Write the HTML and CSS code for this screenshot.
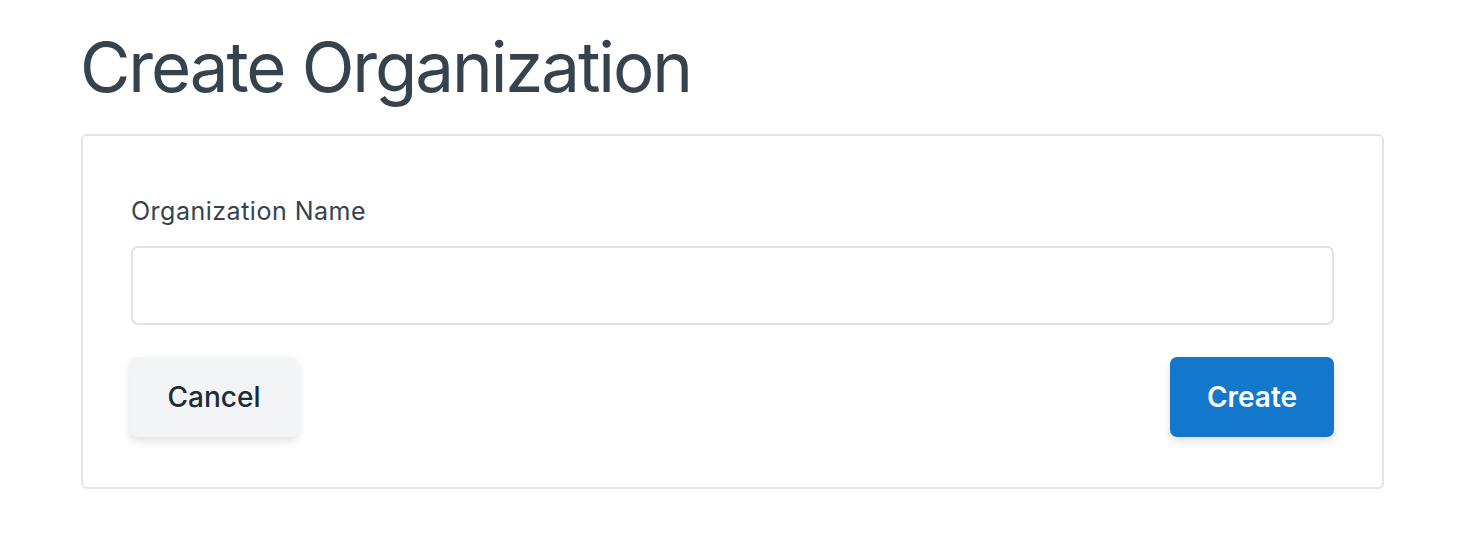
FILE: index.html
```html
<!DOCTYPE html>
<html>
<head>
<meta charset="utf-8">
<link rel="stylesheet" href="styles.css">
</head>
<body>
<main class="page">
  <h1 class="title">Create Organization</h1>
  <form class="card">
    <label class="label" for="org">Organization Name</label>
    <input class="input" id="org" type="text">
    <div class="actions">
      <button type="button" class="btn btn-cancel">Cancel</button>
      <button type="submit" class="btn btn-create">Create</button>
    </div>
  </form>
</main>
</body>
</html>
```
FILE: styles.css
```css
* { box-sizing: border-box; }
html, body { margin: 0; background: #fff; }
body { font-family: Inter, "Noto Sans", sans-serif; color: #36434d; }
.page { padding: 23px 90px 0 80px; width: 1474px; }
.title {
  margin: 0 0 23px 0;
  font-size: 69px;
  font-weight: 400;
  line-height: 88px;
  letter-spacing: -2.1px;
  color: #36434d;
}
.card {
  width: 1303px;
  margin-left: 1px;
  border: 2px solid #e1e4e8;
  border-radius: 6px;
  padding: 59px 48px 50px 48px;
  display: flex;
  flex-direction: column;
}
.label {
  font-size: 25px;
  line-height: 32px;
  letter-spacing: 0.5px;
  color: #36434d;
  margin-bottom: 19px;
}
.input {
  height: 79px;
  border: 2px solid #dfe2e6;
  border-radius: 7px;
  background: #fff;
  font: inherit;
  margin-bottom: 32px;
}
.actions { display: flex; justify-content: space-between; }
.btn {
  height: 80px;
  border: none;
  border-radius: 7px;
  font-family: Inter, "Noto Sans", sans-serif;
  font-size: 28px;
  font-weight: 500;
  padding: 0;
  box-shadow: 0 4px 10px rgba(0,0,0,0.12);
}
.btn-cancel { width: 168px; margin-left: -1px; background: #f3f4f6; color: #222b33; }
.btn-create { width: 164px; background: #1378cc; color: #fff; font-weight: 600; }
```
